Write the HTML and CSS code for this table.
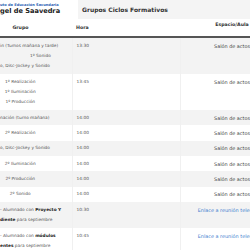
FILE: index.html
```html
<!DOCTYPE html>
<html lang="es">
<head>
<meta charset="utf-8">
<title>Grupos Ciclos Formativos</title>
<link rel="stylesheet" href="styles.css">
</head>
<body>
<header class="top">
  <div class="brand">
    <div class="inst">uto de Educación Secundaria</div>
    <div class="name">gel de Saavedra</div>
  </div>
  <div class="titlebar"><h1 class="title">Grupos Ciclos Formativos</h1></div>
</header>
<table class="grid">
  <colgroup><col class="c1"><col class="c2"><col class="c3"></colgroup>
  <thead>
    <tr><th class="g">Grupo</th><th class="h">Hora</th><th class="e">Espacio/Aula</th></tr>
  </thead>
  <tbody>
    <tr class="alt">
      <td class="g">in (Turnos mañana y tarde)<br><span class="shift">1º Sonido</span><br>o, Disc-Jockey y Sonido</td>
      <td class="h">13:30</td>
      <td class="e">Salón de actos</td>
    </tr>
    <tr>
      <td class="g">1º Realización<br>1º Iluminación<br>1º Producción</td>
      <td class="h">13:45</td>
      <td class="e">Salón de actos</td>
    </tr>
    <tr class="alt one">
      <td class="g">nación (turno mañana)</td>
      <td class="h">14:00</td>
      <td class="e">Salón de actos</td>
    </tr>
    <tr class="one">
      <td class="g">2º Realización</td>
      <td class="h">14:00</td>
      <td class="e">Salón de actos</td>
    </tr>
    <tr class="alt one">
      <td class="g">o, Disc-Jockey y Sonido</td>
      <td class="h">14:00</td>
      <td class="e">Salón de actos</td>
    </tr>
    <tr class="one">
      <td class="g">2º Iluminación</td>
      <td class="h">14:00</td>
      <td class="e">Salón de actos</td>
    </tr>
    <tr class="alt one">
      <td class="g">2º Producción</td>
      <td class="h">14:00</td>
      <td class="e">Salón de actos</td>
    </tr>
    <tr class="one">
      <td class="g">2º Sonido</td>
      <td class="h">14:00</td>
      <td class="e">Salón de actos</td>
    </tr>
    <tr class="alt">
      <td class="g">- Alumnado con <b>Proyecto Y</b><br><b>diente</b> para septiembre</td>
      <td class="h">10:30</td>
      <td class="e"><a href="#">Enlace a reunión telemática</a></td>
    </tr>
    <tr>
      <td class="g">- Alumnado con <b>módulos</b><br><b>entes</b> para septiembre</td>
      <td class="h">10:45</td>
      <td class="e"><a href="#">Enlace a reunión telemática</a></td>
    </tr>
  </tbody>
</table>
</body>
</html>
```
FILE: styles.css
```css
html, body {
  margin: 0;
  padding: 0;
  overflow: hidden;
  background: #fff;
}
body {
  font-family: "DejaVu Sans", sans-serif;
  color: #555;
}
.top {
  display: flex;
  height: 19px;
}
.brand {
  width: 78px;
  flex: none;
  padding-top: 3px;
  box-sizing: border-box;
}
.inst {
  font-size: 3.6px;
  line-height: 4px;
  font-weight: bold;
  color: #2d5fb3;
  white-space: nowrap;
}
.name {
  font-size: 6.6px;
  line-height: 9px;
  font-weight: bold;
  color: #222;
  white-space: nowrap;
}
.titlebar {
  flex: 1;
  background: #f4f4f4;
  display: flex;
  align-items: center;
  padding-left: 4px;
}
.title {
  margin: 0;
  font-size: 6px;
  font-weight: bold;
  color: #333;
  white-space: nowrap;
}
.grid {
  border-collapse: collapse;
  table-layout: fixed;
  width: 284px;
}
.c1 { width: 72px; }
.c2 { width: 108px; }
.c3 { width: 104px; }
th {
  height: 14px;
  padding: 0;
  font-size: 4.7px;
  font-weight: bold;
  color: #333;
  border-bottom: 2px solid #555;
  white-space: nowrap;
  vertical-align: middle;
}
td {
  padding: 3px 0;
  font-size: 4.3px;
  line-height: 10px;
  vertical-align: top;
  white-space: nowrap;
  border-right: 1px solid #f0f0f0;
}
.one td {
  padding: 2.67px 0;
}
.alt td {
  background: #f3f3f3;
}
th.g, td.g {
  text-align: center;
  padding-right: 31px;
}
th.h, td.h {
  text-align: left;
  padding-left: 4px;
}
th.e {
  text-align: center;
  vertical-align: top;
  padding-top: 3px;
}
td.e {
  text-align: center;
  font-family: "DejaVu Sans", Verdana, sans-serif;
  font-size: 4.9px;
  color: #444;
}
.shift {
  padding-left: 30px;
}
td b {
  color: #222;
}
a {
  color: #3f7fd0;
  text-decoration: none;
}
```
